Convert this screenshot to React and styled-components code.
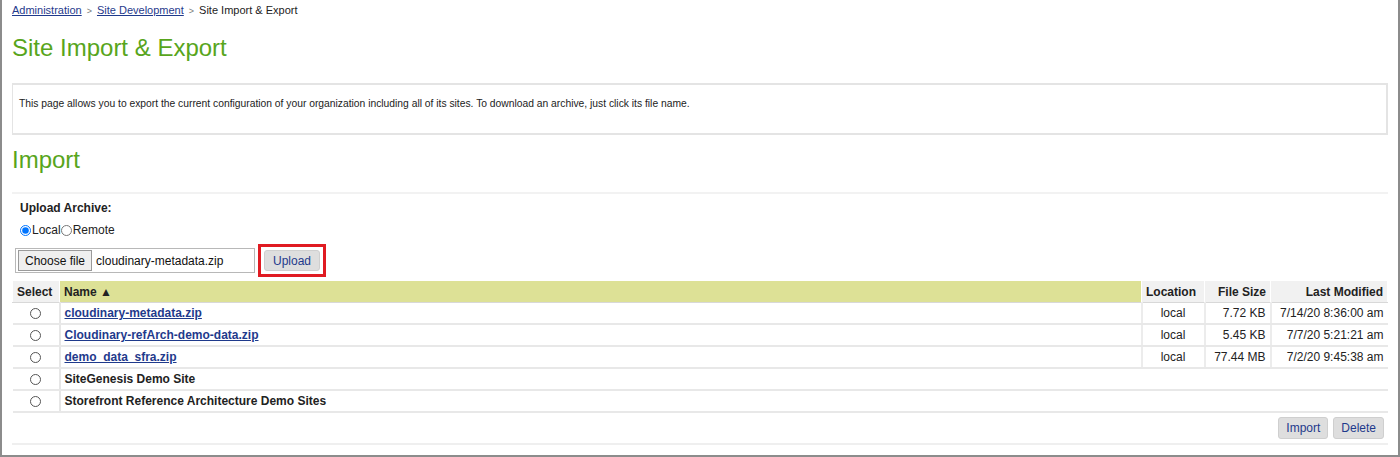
import React from "react";
import styled, { createGlobalStyle } from "styled-components";

const GlobalStyle = createGlobalStyle`
    body {
        margin: 0;
        background: #fff;
        font-family: "Liberation Sans", Arial, sans-serif;
    }
`

const Frame = styled.div`
    box-sizing: border-box;
    width: 1400px;
    height: 457px;
    border: 2px solid #8c8c8c;
    border-top: none;
    padding: 3px 10px 0 10px;
    overflow: hidden;
`

const Crumbs = styled.div`
    font-size: 11px;
    color: #222;
    height: 14px;
    line-height: 14px;
`

const CrumbLink = styled.a`
    color: #1f3a8c;
    text-decoration: underline;
`

const Sep = styled.span`
    margin: 0 5px;
    color: #777;
    font-size: 9px;
`

const Title = styled.h1`
    margin: 0;
    padding-top: 17px;
    height: 46px;
    box-sizing: border-box;
    font-size: 24px;
    font-weight: normal;
    color: #58a51c;
    line-height: 28px;
`

const InfoBox = styled.div`
    margin-top: 20px;
    height: 52px;
    box-sizing: border-box;
    border: 2px solid #e4e4e4;
    border-left-width: 1px;
    padding: 13px 6px 0 6px;
    font-size: 10.3px;
    line-height: 12px;
    color: #222;
`

const Heading = styled.h2`
    margin: 0;
    height: 57px;
    padding-top: 11px;
    box-sizing: border-box;
    font-size: 24px;
    font-weight: normal;
    color: #58a51c;
    line-height: 28px;
`

const UploadArea = styled.div`
    border-top: 2px solid #f2f2f2;
    padding: 7px 0 0 8px;
    height: 89px;
    box-sizing: border-box;
`

const Label = styled.div`
    font-size: 12px;
    font-weight: bold;
    color: #222;
    line-height: 14px;
`

const RadioRow = styled.div`
    display: flex;
    align-items: center;
    margin-top: 8px;
    font-size: 12px;
    color: #222;
    height: 14px;
`

const Radio = styled.input`
    width: 11px;
    height: 11px;
    margin: 0 1px 0 0;
`

const FileRow = styled.div`
    display: flex;
    align-items: center;
    margin-top: 7px;
    margin-left: -5px;
    gap: 3px;
`

const FileBox = styled.div`
    display: flex;
    align-items: center;
    width: 240px;
    height: 25px;
    box-sizing: border-box;
    border: 1px solid #b8b8b8;
    padding: 2px;
    font-size: 12px;
    color: #111;
`

const ChooseButton = styled.span`
    display: flex;
    align-items: center;
    height: 19px;
    padding: 0 6px;
    background: #efefef;
    border: 1px solid #9a9a9a;
    margin-right: 4px;
    color: #111;
`

const Highlight = styled.div`
    border: 3px solid #e01b22;
    padding: 3px;
`

const Button = styled.button`
    font-family: "Liberation Sans", Arial, sans-serif;
    font-size: 12px;
    color: #1f3a8c;
    background: #dedede;
    border: 1px solid #cfcfcf;
    border-radius: 3px;
    height: ${p => p.$h || 22}px;
    padding: 0 ${p => p.$px || 7}px;
    cursor: pointer;
`

const Table = styled.table`
    width: 100%;
    border-collapse: collapse;
    font-size: 12px;
    color: #222;
`

const Th = styled.th`
    height: 21px;
    padding: 0 4px;
    font-weight: bold;
    text-align: ${p => p.$align || "left"};
    background: ${p => (p.$name ? "#dde196" : "#f1f1f1")};
    border-left: 1px solid #fff;
    border-right: 1px solid #fff;
    border-bottom: 1px solid #d8d8d8;
    width: ${p => p.$w || "auto"};
    white-space: nowrap;
`

const Td = styled.td`
    height: 20px;
    padding: 0 4px;
    text-align: ${p => p.$align || "left"};
    border-bottom: 2px solid #e8e8e8;
    border-left: ${p => (p.$line ? "2px solid #ececec" : "none")};
    font-weight: ${p => (p.$bold ? "bold" : "normal")};
    white-space: nowrap;
`

const SelectCell = styled(Td)`
    text-align: center;
    border-right: 2px solid #e6e6e6;
`

const Ring = styled.span`
    display: inline-block;
    width: 9px;
    height: 9px;
    border: 1px solid #555;
    border-radius: 50%;
    vertical-align: middle;
`

const FileLink = styled.a`
    color: #1f3a8c;
    font-weight: bold;
    text-decoration: underline;
`

const Footer = styled.div`
    display: flex;
    justify-content: flex-end;
    gap: 5px;
    padding: 4px 4px 4px 0;
    border-bottom: 2px solid #efefef;
`

const files = [
    { name: "cloudinary-metadata.zip", size: "7.72 KB", date: "7/14/20 8:36:00 am" },
    { name: "Cloudinary-refArch-demo-data.zip", size: "5.45 KB", date: "7/7/20 5:21:21 am" },
    { name: "demo_data_sfra.zip", size: "77.44 MB", date: "7/2/20 9:45:38 am" },
];

const sites = ["SiteGenesis Demo Site", "Storefront Reference Architecture Demo Sites"];

function App() {
    return (
        <Frame>
            <GlobalStyle />
            <Crumbs>
                <CrumbLink>Administration</CrumbLink>
                <Sep>&gt;</Sep>
                <CrumbLink>Site Development</CrumbLink>
                <Sep>&gt;</Sep>
                Site Import &amp; Export
            </Crumbs>
            <Title>Site Import &amp; Export</Title>
            <InfoBox>
                This page allows you to export the current configuration of your organization including all of its sites. To download an archive, just click its file name.
            </InfoBox>
            <Heading>Import</Heading>
            <UploadArea>
                <Label>Upload Archive:</Label>
                <RadioRow>
                    <Radio type="radio" name="src" defaultChecked />Local
                    <Radio type="radio" name="src" />Remote
                </RadioRow>
                <FileRow>
                    <FileBox>
                        <ChooseButton>Choose file</ChooseButton>
                        cloudinary-metadata.zip
                    </FileBox>
                    <Highlight>
                        <Button $h={21} $px={8}>Upload</Button>
                    </Highlight>
                </FileRow>
            </UploadArea>
            <Table>
                <thead>
                    <tr>
                        <Th $w="38px">Select</Th>
                        <Th $name>Name ▲</Th>
                        <Th $w="54px">Location</Th>
                        <Th $w="57px" $align="right">File Size</Th>
                        <Th $w="108px" $align="right">Last Modified</Th>
                    </tr>
                </thead>
                <tbody>
                    {files.map(f => (
                        <tr key={f.name}>
                            <SelectCell><Ring /></SelectCell>
                            <Td><FileLink>{f.name}</FileLink></Td>
                            <Td $align="center" $line>local</Td>
                            <Td $align="right" $line>{f.size}</Td>
                            <Td $align="right" $line>{f.date}</Td>
                        </tr>
                    ))}
                    {sites.map(s => (
                        <tr key={s}>
                            <SelectCell><Ring /></SelectCell>
                            <Td colSpan={4} $bold>{s}</Td>
                        </tr>
                    ))}
                </tbody>
            </Table>
            <Footer>
                <Button>Import</Button>
                <Button>Delete</Button>
            </Footer>
        </Frame>
    );
}

export default App;
